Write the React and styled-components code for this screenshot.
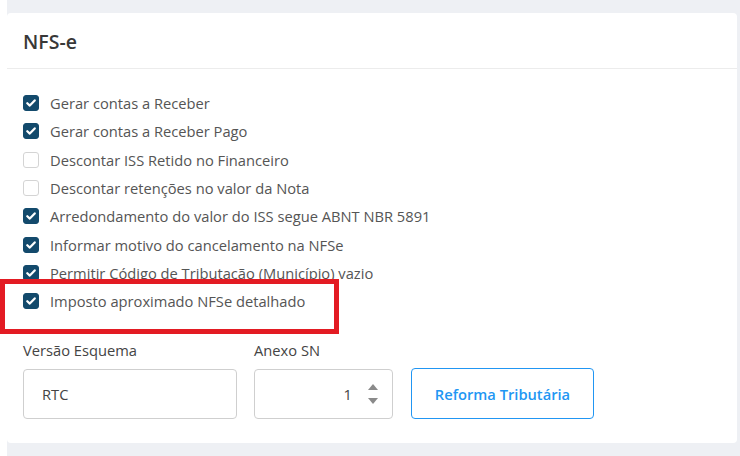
import React from "react";
import styled, { createGlobalStyle } from "styled-components";

const Global = createGlobalStyle`
  body {
    margin: 0;
    background: #fff;
    font-family: "Open Sans", "Lato", sans-serif;
  }
`;

const Page = styled.div`
  margin-left: 7px;
  background: #eef0f4;
  padding: 13px 3px 13px 0;
`;

const Card = styled.section`
  position: relative;
  background: #fff;
  border-radius: 4px;
  height: 430px;
  box-sizing: border-box;
`;

const Header = styled.header`
  height: 56px;
  box-sizing: border-box;
  border-bottom: 1px solid #ececec;
  padding: 0 16px;
  display: flex;
  align-items: center;
`;

const Title = styled.h2`
  margin: 1px 0 0;
  font-size: 19.5px;
  font-weight: 600;
  color: #383838;
`;

const Body = styled.div`
  padding: 20px 16px 0;
`;

const Options = styled.div`
  display: flex;
  flex-direction: column;
`;

const Row = styled.label`
  display: flex;
  align-items: center;
  gap: 11px;
  height: 28.3px;
  font-size: 14.7px;
  color: #555;
`;

const Box = styled.span`
  flex: none;
  width: 16px;
  height: 16px;
  border-radius: 3px;
  box-sizing: border-box;
  display: flex;
  align-items: center;
  justify-content: center;
  background: ${(p) => (p.$checked ? "#134a6c" : "#fff")};
  border: 1px solid ${(p) => (p.$checked ? "#134a6c" : "#d4d4d4")};
`;

const Highlight = styled.div`
  position: absolute;
  left: -7px;
  top: 266px;
  width: 339px;
  height: 55px;
  box-sizing: border-box;
  border: 5px solid #e31b23;
  pointer-events: none;
`;

const Fields = styled.div`
  display: flex;
  align-items: flex-end;
  gap: 17px;
  margin-top: 25px;
`;

const Field = styled.div`
  display: flex;
  flex-direction: column;
  gap: 9px;
`;

const Label = styled.span`
  font-size: 14.7px;
  color: #444;
  line-height: 20px;
`;

const Input = styled.div`
  width: ${(p) => p.$w}px;
  height: 50px;
  box-sizing: border-box;
  border: 1px solid #cfcfcf;
  border-radius: 4px;
  display: flex;
  align-items: center;
  justify-content: ${(p) => (p.$right ? "flex-end" : "flex-start")};
  padding: 0 ${(p) => (p.$right ? "14px" : "18px")};
  font-size: 14.7px;
  color: #444;
  gap: 16px;
`;

const Spin = styled.span`
  display: flex;
  flex-direction: column;
  gap: 8px;
`;

const Button = styled.button`
  width: 183px;
  height: 51px;
  margin-left: 1px;
  border: 1px solid #2196f3;
  border-radius: 4px;
  background: #fff;
  color: #2196f3;
  font-family: inherit;
  font-size: 14.7px;
  font-weight: 600;
`;

const Check = () => (
  <svg width="10" height="8" viewBox="0 0 10 8">
    <path d="M1.3 4.2 3.8 6.6 8.7 1.4" fill="none" stroke="#fff" strokeWidth="2.2" strokeLinecap="round" strokeLinejoin="round" />
  </svg>
);

const Tri = ({ up }) => (
  <svg width="10" height="6" viewBox="0 0 10 6">
    <path d={up ? "M0 6 5 0 10 6Z" : "M0 0 5 6 10 0Z"} fill="#8a8a8a" />
  </svg>
);

const options = [
  ["Gerar contas a Receber", true],
  ["Gerar contas a Receber Pago", true],
  ["Descontar ISS Retido no Financeiro", false],
  ["Descontar retenções no valor da Nota", false],
  ["Arredondamento do valor do ISS segue ABNT NBR 5891", true],
  ["Informar motivo do cancelamento na NFSe", true],
  ["Permitir Código de Tributação (Município) vazio", true],
  ["Imposto aproximado NFSe detalhado", true],
];

export default function App() {
  return (
    <>
      <Global />
      <Page>
        <Card>
          <Header>
            <Title>NFS-e</Title>
          </Header>
          <Body>
            <Options>
              {options.map(([text, checked]) => (
                <Row key={text}>
                  <Box $checked={checked}>{checked && <Check />}</Box>
                  {text}
                </Row>
              ))}
            </Options>
            <Fields>
              <Field>
                <Label>Versão Esquema</Label>
                <Input $w={214}>RTC</Input>
              </Field>
              <Field>
                <Label>Anexo SN</Label>
                <Input $w={139} $right>
                  1
                  <Spin>
                    <Tri up />
                    <Tri />
                  </Spin>
                </Input>
              </Field>
              <Button>Reforma Tributária</Button>
            </Fields>
          </Body>
          <Highlight />
        </Card>
      </Page>
    </>
  );
}
